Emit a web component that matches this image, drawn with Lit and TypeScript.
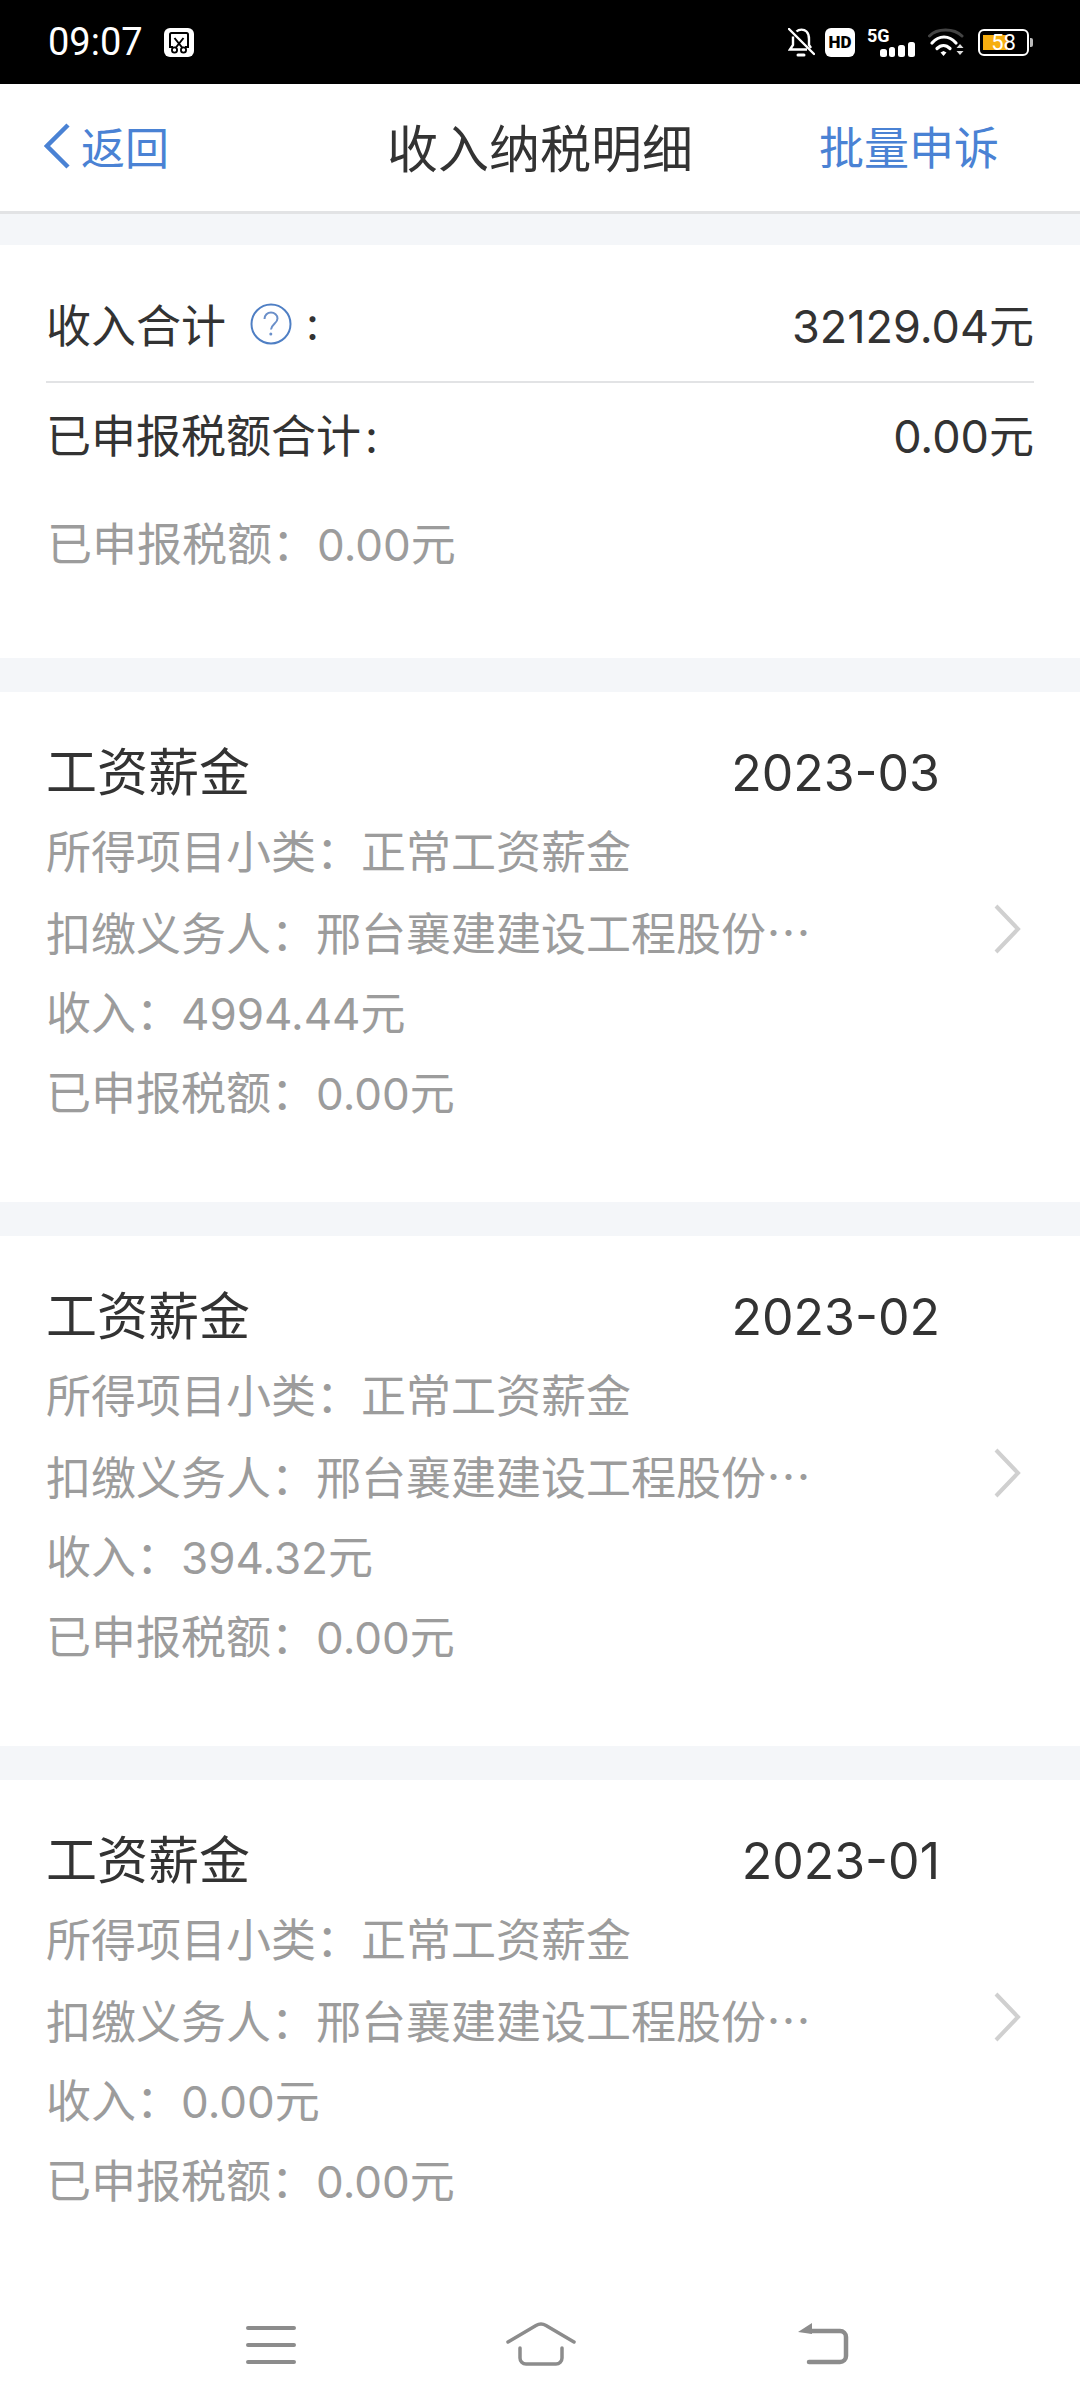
import { LitElement, html, css } from "lit";
import { customElement } from "lit/decorators.js";

const items = [
  { month: "2023-03", income: "4994.44" },
  { month: "2023-02", income: "394.32" },
  { month: "2023-01", income: "0.00" },
];

@customElement("app-root")
export class AppRoot extends LitElement {
  static styles = css`
    :host {
      display: block;
      width: 1080px;
      height: 2408px;
      overflow: hidden;
      background: #fff;
      font-family: Inter, "Noto Sans CJK SC", sans-serif;
      color: #333;
    }
    * { box-sizing: border-box; }
    .page { height: 2408px; display: flex; flex-direction: column; }
    .status {
      height: 84px; flex: none; background: #000; color: #fff;
      display: flex; align-items: center; justify-content: space-between;
      padding: 0 47px 0 48px;
    }
    .status-left, .status-right { display: flex; align-items: center; }
    .time { font: 400 38px Roboto, sans-serif; }
    .shot { margin-left: 21px; display: block; }
    .hd {
      width: 30px; height: 29px; border-radius: 6px; background: #fff; color: #000;
      font: 900 17px Roboto, sans-serif; display: flex; align-items: center; justify-content: center;
      margin-left: 10px;
    }
    .sig { margin-left: 12px; width: 48px; height: 29px; position: relative; }
    .sig-label { font: 700 18px/15px Roboto, sans-serif; position: absolute; left: 0; top: 0; }
    .sig svg { position: absolute; left: 0; top: 0; }
    .wifi { margin-left: 13px; display: block; }
    .batt {
      margin-left: 14px; width: 51px; height: 27px; border: 2px solid #fff; border-radius: 6px;
      position: relative; padding: 4px 3px; display: flex; align-items: stretch;
    }
    .batt-fill { width: 24px; background: #f6ae10; }
    .batt-num {
      position: absolute; inset: 0; font: 400 22px/23px Roboto, sans-serif; text-align: center; color: #fff;
    }
    .batt-cap { width: 3px; height: 9px; background: #bbb; margin-left: 1px; border-radius: 0 2px 2px 0; }
    .nav {
      height: 130px; flex: none; background: #fff; border-bottom: 3px solid #e2e3e5;
      display: grid; grid-template-columns: 1fr auto 1fr; align-items: center;
      padding: 0 44px 4px; font-family: "Noto Sans CJK SC", sans-serif;
    }
    .back { display: flex; align-items: center; color: #4a82d4; font-size: 44px; }
    .back svg { display: block; margin-right: 11px; }
    .title { font-size: 51px; line-height: 60px; color: #333; }
    .action { justify-self: end; font-size: 45px; color: #4a82d4; margin-right: 37px; }
    .cards { display: flex; flex-direction: column; flex: none; background: #f4f6f9; padding-top: 31px; gap: 34px; }
    .card { background: #fff; }
    .summary { height: 413px; }
    .sum-row {
      margin: 0 46px; display: flex; justify-content: space-between; align-items: center;
      font-size: 45px;
    }
    .sum-first { height: 138px; padding-top: 21px; border-bottom: 2px solid #e2e3e5; }
    .sum-second { height: 101px; }
    .label { display: flex; align-items: center; }
    .help { margin: 0 14px 0 24px; display: block; }
    .colon { margin-left: 4px; }
    .num { font-size: 44px; }
    .sum-row .num { font-size: 45px; }
    .muted { color: #9c9c9c; font-size: 45px; line-height: 79px; white-space: nowrap; }
    .sum-muted { margin: 21px 47px 0; }
    .detail {
      height: 510px; display: flex; align-items: flex-start; padding: 41px 0 0 46px;
    }
    .detail-last { height: auto; }
    .detail-body { width: 894px; }
    .detail-head {
      display: flex; justify-content: space-between; align-items: center;
      height: 80px;
    }
    .detail-title { font-size: 51px; padding-bottom: 8px; }
    .detail-month { font-size: 50px; font-weight: 400; }
    .ellipsis { font-family: "Noto Sans CJK SC", sans-serif; }
    .chev { display: block; margin: 171px 0 0 53px; }
    .bar {
      margin-top: auto; height: 108px; flex: none; display: flex;
      align-items: flex-start; background: #fff; padding: 20px 0 0 246px;
    }
    .bar svg { display: block; }
    .bar-home { margin-left: 210px; }
    .bar-back { margin-left: 222px; }
  `;

  private statusBar() {
    return html`
      <div class="status">
        <div class="status-left">
          <span class="time">09:07</span>
          <svg class="shot" width="30" height="29" viewBox="0 0 30 29">
            <rect width="30" height="29" rx="6" fill="#fff"/>
            <path d="M9 19H6V6.500A1.500 1.500 0 0 1 7.500 5h15A1.500 1.500 0 0 1 24 6.500V19h-3" fill="none" stroke="#000" stroke-width="2"/>
            <path d="M10.500 10l8 10M19.500 10l-8 10" stroke="#000" stroke-width="2" fill="none"/>
            <circle cx="10.500" cy="22" r="2.600" fill="#fff" stroke="#000" stroke-width="1.800"/>
            <circle cx="19.500" cy="22" r="2.600" fill="#fff" stroke="#000" stroke-width="1.800"/>
          </svg>
        </div>
        <div class="status-right">
          <svg width="27" height="29" viewBox="0 0 27 29" fill="none" stroke="#fff" stroke-width="2.400">
            <path d="M5 8.500V17l-3 4.500h17"/>
            <path d="M8.500 3.500C11 1 16 1 18.500 3.500 20.500 5.500 21 8 21 11v6l2 3"/>
            <path d="M1 1l25 25" stroke-linecap="round"/>
            <path d="M10 27h6" stroke-width="3" stroke-linecap="round"/>
          </svg>
          <div class="hd">HD</div>
          <div class="sig">
            <span class="sig-label">5G</span>
            <svg width="48" height="29" viewBox="0 0 48 29" fill="#fff">
              <rect x="13" y="21" width="7" height="8" rx="2.500"/>
              <rect x="22" y="19" width="6" height="10" rx="2.500"/>
              <rect x="31" y="17" width="7" height="12" rx="2.500"/>
              <rect x="41" y="14" width="7" height="15" rx="2.500"/>
            </svg>
          </div>
          <svg class="wifi" width="36" height="29" viewBox="0 0 36 29" fill="none" stroke-linecap="round">
            <path d="M1.500 8C9 0 26 0 34 8" stroke="#444" stroke-width="3"/>
            <path d="M4 15C11 7 21 7 28 15" stroke="#fff" stroke-width="3.200"/>
            <path d="M9 20.500c4-4 9-4 13 0" stroke="#fff" stroke-width="3.200"/>
            <path d="M12.500 24.500L15.500 23l3 1.500L15.500 28z" fill="#fff"/>
            <path d="M32 16l3.500 4h-7zM32 27l-3.500-4h7z" fill="#ddd"/>
          </svg>
          <div class="batt">
            <div class="batt-fill"></div>
            <span class="batt-num">58</span>
          </div>
          <div class="batt-cap"></div>
        </div>
      </div>
    `;
  }

  private chevron() {
    return html`<svg class="chev" width="28" height="50" viewBox="0 0 28 50" fill="none">
      <path d="M3 2l22 23L3 48" stroke="#d0d0d0" stroke-width="4"/>
    </svg>`;
  }

  render() {
    return html`
      <div class="page">
        ${this.statusBar()}
        <div class="nav">
          <div class="back">
            <svg width="26" height="46" viewBox="0 0 26 46" fill="none">
              <path d="M24 2L3 23l21 21" stroke="#4a82d4" stroke-width="4.500"/>
            </svg>
            <span>返回</span>
          </div>
          <div class="title">收入纳税明细</div>
          <div class="action">批量申诉</div>
        </div>
        <div class="cards">
          <div class="card summary">
            <div class="sum-row sum-first">
              <div class="label">
                <span>收入合计</span>
                <svg class="help" width="42" height="42" viewBox="0 0 42 42" fill="none">
                  <circle cx="21" cy="21" r="19.500" stroke="#4f7fc4" stroke-width="2"/>
                  <path d="M14.500 16c0-4 3-6.500 6.500-6.500s6.500 2.500 6.500 6c0 5-6 5.500-6.500 11" stroke="#6a8fc9" stroke-width="2"/>
                  <circle cx="20.800" cy="31" r="1.500" fill="#6a8fc9"/>
                </svg>
                <span>:</span>
              </div>
              <span><span class="num">32129.04</span>元</span>
            </div>
            <div class="sum-row sum-second">
              <span>已申报税额合计<span class="colon">:</span></span>
              <span><span class="num">0.00</span>元</span>
            </div>
            <div class="muted sum-muted">已申报税额：<span class="num">0.00</span>元</div>
          </div>
          ${items.map(
            (it, i) => html`
              <div class="card detail ${i === items.length - 1 ? "detail-last" : ""}">
                <div class="detail-body">
                  <div class="detail-head">
                    <span class="detail-title">工资薪金</span>
                    <span class="detail-month">${it.month}</span>
                  </div>
                  <div class="muted">所得项目小类：正常工资薪金</div>
                  <div class="muted">扣缴义务人：邢台襄建建设工程股份<span class="ellipsis">…</span></div>
                  <div class="muted">收入：<span class="num">${it.income}</span>元</div>
                  <div class="muted">已申报税额：<span class="num">0.00</span>元</div>
                </div>
                ${this.chevron()}
              </div>
            `
          )}
        </div>
        <div class="bar">
          <svg width="50" height="46" viewBox="0 0 50 46" fill="none" stroke="#8c8c8c" stroke-width="4" stroke-linecap="round">
            <path d="M2 8h46M2 25h46M2 42h46"/>
          </svg>
          <svg class="bar-home" width="70" height="46" viewBox="0 0 70 46" fill="none" stroke="#8c8c8c" stroke-width="3.500" stroke-linecap="round">
            <path d="M2 22L30 5.500q5-3 10 0L68 22"/>
            <path d="M14 28v10a6 6 0 0 0 6 6h30a6 6 0 0 0 6-6V28"/>
          </svg>
          <svg class="bar-back" width="52" height="46" viewBox="0 0 52 46" fill="none" stroke="#8c8c8c" stroke-width="4.500" stroke-linecap="round">
            <path d="M12 11h30a6 6 0 0 1 6 6v19a6 6 0 0 1-6 6H11"/>
            <path d="M0 12L14 3v11z" fill="#8c8c8c" stroke="none"/>
          </svg>
        </div>
      </div>
    `;
  }
}
